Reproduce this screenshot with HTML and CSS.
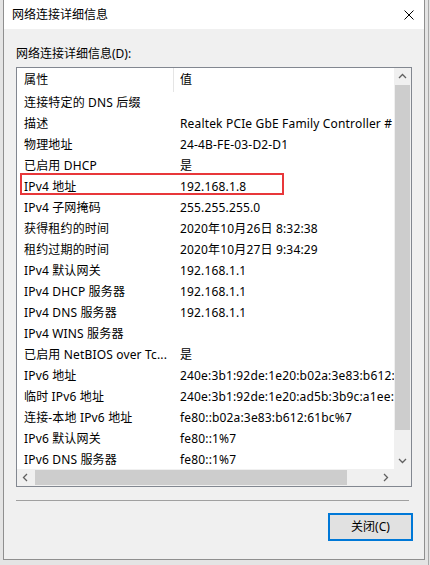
FILE: index.html
```html
<!DOCTYPE html>
<html lang="zh-CN">
<head>
<meta charset="utf-8">
<title>网络连接详细信息</title>
<link rel="stylesheet" href="styles.css">
</head>
<body>
<div class="screen">
  <div class="window">
    <div class="titlebar">
      <span class="title">网络连接详细信息</span>
      <svg class="close" width="10" height="10" viewBox="0 0 10 10"><path d="M0.5 0.5 L9.5 9.5 M9.5 0.5 L0.5 9.5" stroke="#000" stroke-width="1" fill="none"/></svg>
    </div>
    <div class="body">
      <div class="label">网络连接详细信息(D):</div>
      <div class="listbox">
        <div class="list-main">
          <div class="viewport">
            <div class="header">
              <div class="c1">属性</div>
              <div class="c2 hsep">值</div>
            </div>
            <div class="row"><div class="c1">连接特定的 DNS 后缀</div><div class="c2"></div></div>
            <div class="row"><div class="c1">描述</div><div class="c2">Realtek PCIe GbE Family Controller #</div></div>
            <div class="row"><div class="c1">物理地址</div><div class="c2">24-4B-FE-03-D2-D1</div></div>
            <div class="row"><div class="c1">已启用 DHCP</div><div class="c2">是</div></div>
            <div class="row"><div class="c1">IPv4 地址</div><div class="c2">192.168.1.8</div></div>
            <div class="row"><div class="c1">IPv4 子网掩码</div><div class="c2">255.255.255.0</div></div>
            <div class="row"><div class="c1">获得租约的时间</div><div class="c2">2020年10月26日 8:32:38</div></div>
            <div class="row"><div class="c1">租约过期的时间</div><div class="c2">2020年10月27日 9:34:29</div></div>
            <div class="row"><div class="c1">IPv4 默认网关</div><div class="c2">192.168.1.1</div></div>
            <div class="row"><div class="c1">IPv4 DHCP 服务器</div><div class="c2">192.168.1.1</div></div>
            <div class="row"><div class="c1">IPv4 DNS 服务器</div><div class="c2">192.168.1.1</div></div>
            <div class="row"><div class="c1">IPv4 WINS 服务器</div><div class="c2"></div></div>
            <div class="row"><div class="c1">已启用 NetBIOS over Tc...</div><div class="c2">是</div></div>
            <div class="row"><div class="c1">IPv6 地址</div><div class="c2">240e:3b1:92de:1e20:b02a:3e83:b612:</div></div>
            <div class="row"><div class="c1">临时 IPv6 地址</div><div class="c2">240e:3b1:92de:1e20:ad5b:3b9c:a1ee:</div></div>
            <div class="row"><div class="c1">连接-本地 IPv6 地址</div><div class="c2">fe80::b02a:3e83:b612:61bc%7</div></div>
            <div class="row"><div class="c1">IPv6 默认网关</div><div class="c2">fe80::1%7</div></div>
            <div class="row"><div class="c1">IPv6 DNS 服务器</div><div class="c2">fe80::1%7</div></div>
            <div class="highlight"></div>
          </div>
          <div class="vscroll">
            <div class="sbtn"><svg width="17" height="17" viewBox="0 0 17 17"><polyline points="5,10 8.5,6.5 12,10" fill="none" stroke="#606060" stroke-width="1.3"/></svg></div>
            <div class="vtrack"><div class="vthumb"></div></div>
            <div class="sbtn"><svg width="17" height="17" viewBox="0 0 17 17"><polyline points="5,7 8.5,10.5 12,7" fill="none" stroke="#606060" stroke-width="1.3"/></svg></div>
          </div>
        </div>
        <div class="hrow">
          <div class="hscroll">
            <div class="sbtn"><svg width="17" height="17" viewBox="0 0 17 17"><polyline points="10,5 6.5,8.5 10,12" fill="none" stroke="#606060" stroke-width="1.3"/></svg></div>
            <div class="htrack"><div class="hthumb"></div></div>
            <div class="sbtn"><svg width="17" height="17" viewBox="0 0 17 17"><polyline points="7,5 10.5,8.5 7,12" fill="none" stroke="#606060" stroke-width="1.3"/></svg></div>
          </div>
          <div class="corner"></div>
        </div>
      </div>
      <div class="sep"></div>
      <div class="actions"><button class="btn">关闭(C)</button></div>
    </div>
  </div>
  <div class="edge"></div>
</div>
</body>
</html>
```
FILE: styles.css
```css
* { box-sizing: border-box; }
html, body { margin: 0; padding: 0; }
body {
  width: 430px;
  height: 565px;
  overflow: hidden;
  background: #e4e4e4;
  font-family: "Noto Sans", "Noto Sans CJK SC", sans-serif;
  font-size: 12px;
  color: #000;
}
.screen {
  display: flex;
  padding-left: 3px;
  height: 565px;
}
.window {
  width: 422px;
  height: 560px;
  background: #f0f0f0;
  border: 1px solid #8f8f8f;
  border-top: none;
  display: flex;
  flex-direction: column;
}
.edge {
  width: 1px;
  height: 565px;
  margin-left: 3px;
  background: #a8a8a8;
}
.titlebar {
  height: 29px;
  background: #fff;
  display: flex;
  align-items: center;
  justify-content: space-between;
  padding: 0 10px 0 8px;
  flex: none;
}
.title { line-height: 16px; }
.close { display: block; }
.body {
  padding: 17px 11px 0 12px;
  display: flex;
  flex-direction: column;
}
.label { line-height: 16px; height: 16px; }
.listbox {
  margin-top: 5px;
  width: 396px;
  height: 420px;
  border: 1px solid #828790;
  background: #fff;
  display: flex;
  flex-direction: column;
}
.list-main { display: flex; height: 401px; }
.viewport {
  position: relative;
  width: 377px;
  height: 401px;
  overflow: hidden;
  background: #fff;
  letter-spacing: 0.16px;
}
.header, .row {
  display: flex;
  white-space: nowrap;
}
.header { height: 24px; line-height: 24px; }
.row { height: 21px; line-height: 21px; }
.c1 {
  width: 156px;
  flex: none;
  padding-left: 7px;
  overflow: hidden;
}
.c2 {
  flex: none;
  width: 320px;
  padding-left: 7px;
}
.hsep {
  border-left: 1px solid #e5e5e5;
  padding-left: 6px;
}
.highlight {
  position: absolute;
  left: 3px;
  top: 105px;
  width: 264px;
  height: 22px;
  border: 2px solid #e8373a;
}
.vscroll {
  width: 17px;
  background: #f0f0f0;
  display: flex;
  flex-direction: column;
}
.sbtn { width: 17px; height: 17px; flex: none; }
.sbtn svg { display: block; }
.vtrack { flex: 1; }
.vthumb {
  margin-left: 1px;
  width: 15px;
  height: 345px;
  background: #cdcdcd;
}
.hrow { display: flex; height: 17px; }
.hscroll {
  width: 377px;
  display: flex;
  background: #f0f0f0;
}
.htrack { flex: 1; padding-top: 1px; }
.hthumb {
  margin-left: 1px;
  width: 312px;
  height: 15px;
  background: #cdcdcd;
}
.corner { width: 17px; background: #f0f0f0; }
.sep {
  margin-top: 13px;
  width: 393px;
  height: 1px;
  background: #a0a0a0;
}
.actions {
  display: flex;
  justify-content: flex-end;
  margin-top: 12px;
}
.btn {
  width: 85px;
  height: 28px;
  border: 2px solid #0078d7;
  background: #e1e1e1;
  font-family: "Noto Sans", "Noto Sans CJK SC", sans-serif;
  font-size: 12px;
  color: #000;
  padding: 0;
  line-height: 24px;
}
```
